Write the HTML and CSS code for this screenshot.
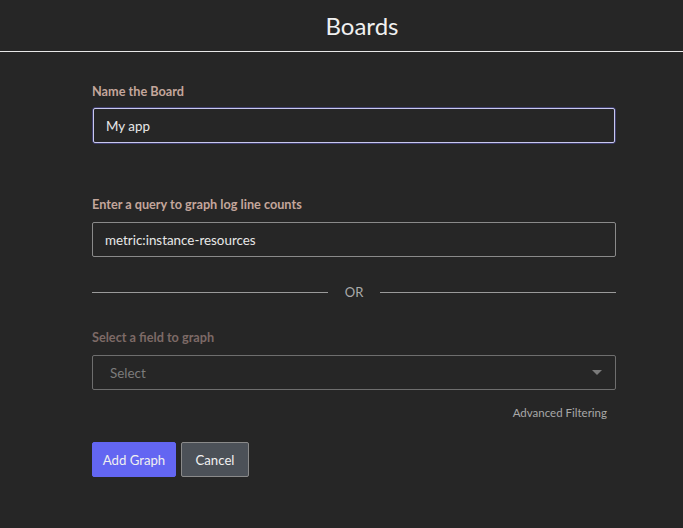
FILE: index.html
```
<!DOCTYPE html>
<html>
<head>
<meta charset="utf-8">
<link rel="stylesheet" href="styles.css">
</head>
<body>
<header class="header"><h1 class="title">Boards</h1></header>
<main class="form">
  <label class="label">Name the Board</label>
  <div class="focus-ring"><input class="input input-focus" value="My app"></div>
  <label class="label label-query">Enter a query to graph log line counts</label>
  <input class="input" value="metric:instance-resources">
  <div class="divider"><span class="line"></span><span class="or">OR</span><span class="line"></span></div>
  <label class="label label-disabled">Select a field to graph</label>
  <div class="select"><span class="select-text">Select</span><span class="caret"></span></div>
  <div class="adv-row"><span class="adv">Advanced Filtering</span></div>
  <div class="buttons">
    <button class="btn btn-primary">Add Graph</button>
    <button class="btn btn-cancel">Cancel</button>
  </div>
</main>
</body>
</html>
```
FILE: styles.css
```
* { box-sizing: border-box; }
html, body { margin: 0; padding: 0; background: #262626; }
body { font-family: Lato, "Noto Sans", sans-serif; color: #e6e6e6; width: 683px; height: 528px; overflow: hidden; }
.header { height: 52px; border-bottom: 1px solid #e8e8e8; display: flex; align-items: center; justify-content: center; padding-left: 41px; }
.title { margin: 0; font-weight: 400; font-size: 24px; color: #f0f0f0; line-height: 1; }
.form { width: 524px; margin-left: 92px; display: flex; flex-direction: column; padding-top: 31px; }
.label { font-size: 12.7px; font-weight: 700; color: #c4a69c; line-height: 16px; }
.label-query { margin-top: 52px; }
.label-disabled { color: #7d6a66; margin-top: 30px; }
.focus-ring { margin-top: 8px; border-radius: 4px; padding: 1px; background: #3f3e6e; }
.input { display: block; width: 100%; height: 35px; background: #262626; border: 1px solid #8a8a8a; color: #e8e8e8; font-family: inherit; font-size: 13.4px; padding: 0 12px; outline: none; border-radius: 2px; }
.input-focus { border: 1px solid #c8c8ee; border-radius: 2px; }
.label-query + .input { margin-top: 10px; }
.divider { display: flex; align-items: center; margin-top: 28px; height: 14px; }
.line { flex: 1; height: 1px; background: #9a9a9a; }
.or { font-size: 13px; color: #aaa; padding: 0 17px; line-height: 14px; }
.select { margin-top: 10px; height: 35px; border: 1px solid #6e6e6e; border-radius: 2px; display: flex; align-items: center; justify-content: space-between; padding: 0 13px 0 17px; }
.select-text { font-size: 13.4px; color: #7c7c7c; }
.caret { width: 0; height: 0; border-left: 5px solid transparent; border-right: 5px solid transparent; border-top: 5px solid #7a7a7a; }
.adv-row { display: flex; justify-content: flex-end; padding-right: 9px; margin-top: 16px; }
.adv { font-size: 11.5px; color: #a8a8a8; }
.buttons { display: flex; gap: 5px; margin-top: 23px; }
.btn { height: 35px; font-family: inherit; font-size: 13.2px; border-radius: 2px; padding: 0; color: #f0f0f0; white-space: nowrap; }
.btn-primary { background: #6366f2; border: 1px solid #6366f2; width: 84px; }
.btn-cancel { background: #4c5158; border: 1px solid #8a8a8a; width: 68px; }
```
